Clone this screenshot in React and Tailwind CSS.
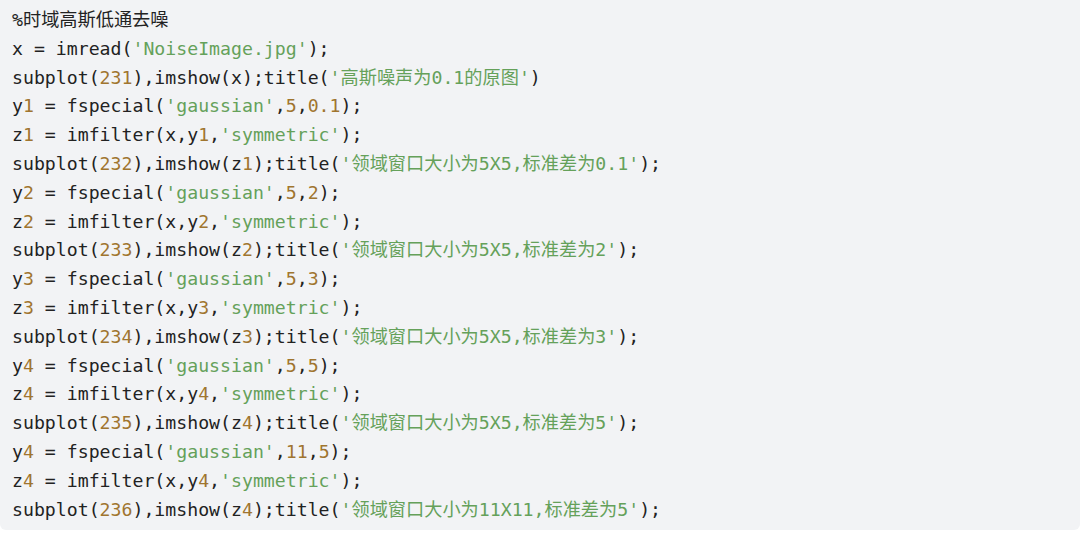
const CODE = [
  "%时域高斯低通去噪",
  "x = imread('NoiseImage.jpg');",
  "subplot(231),imshow(x);title('高斯噪声为0.1的原图')",
  "y1 = fspecial('gaussian',5,0.1);",
  "z1 = imfilter(x,y1,'symmetric');",
  "subplot(232),imshow(z1);title('领域窗口大小为5X5,标准差为0.1');",
  "y2 = fspecial('gaussian',5,2);",
  "z2 = imfilter(x,y2,'symmetric');",
  "subplot(233),imshow(z2);title('领域窗口大小为5X5,标准差为2');",
  "y3 = fspecial('gaussian',5,3);",
  "z3 = imfilter(x,y3,'symmetric');",
  "subplot(234),imshow(z3);title('领域窗口大小为5X5,标准差为3');",
  "y4 = fspecial('gaussian',5,5);",
  "z4 = imfilter(x,y4,'symmetric');",
  "subplot(235),imshow(z4);title('领域窗口大小为5X5,标准差为5');",
  "y4 = fspecial('gaussian',11,5);",
  "z4 = imfilter(x,y4,'symmetric');",
  "subplot(236),imshow(z4);title('领域窗口大小为11X11,标准差为5');",
];

// strings green, numbers brown, everything else plain
function tokenize(line) {
  const out = [];
  const re = /('[^']*')|(\d+(?:\.\d+)?)/g;
  let last = 0;
  let m;
  while ((m = re.exec(line))) {
    if (m.index > last) out.push({ t: line.slice(last, m.index), k: "plain" });
    out.push({ t: m[0], k: m[1] ? "str" : "num" });
    last = re.lastIndex;
  }
  if (last < line.length) out.push({ t: line.slice(last), k: "plain" });
  return out;
}

function CodeLine({ line }) {
  return (
    <div className="whitespace-pre leading-[28.8px]">
      {tokenize(line).map((tok, i) =>
        tok.k === "str" ? (
          <span key={i} className="text-[#65a15a]">{tok.t}</span>
        ) : tok.k === "num" ? (
          <span key={i} className="text-[#a0752f]">{tok.t}</span>
        ) : (
          <span key={i}>{tok.t}</span>
        )
      )}
    </div>
  );
}

export default function App() {
  return (
    <div className="w-[1080px] h-[534px] bg-white">
      <div
        className="h-[530px] bg-[#f2f3f5] rounded-b-md px-[12px] pt-[6px] text-[18.2px] text-[#222222]"
        style={{ fontFamily: '"DejaVu Sans Mono", "Noto Sans CJK SC", monospace' }}
      >
        {CODE.map((line, i) => (
          <CodeLine key={i} line={line} />
        ))}
      </div>
    </div>
  );
}
